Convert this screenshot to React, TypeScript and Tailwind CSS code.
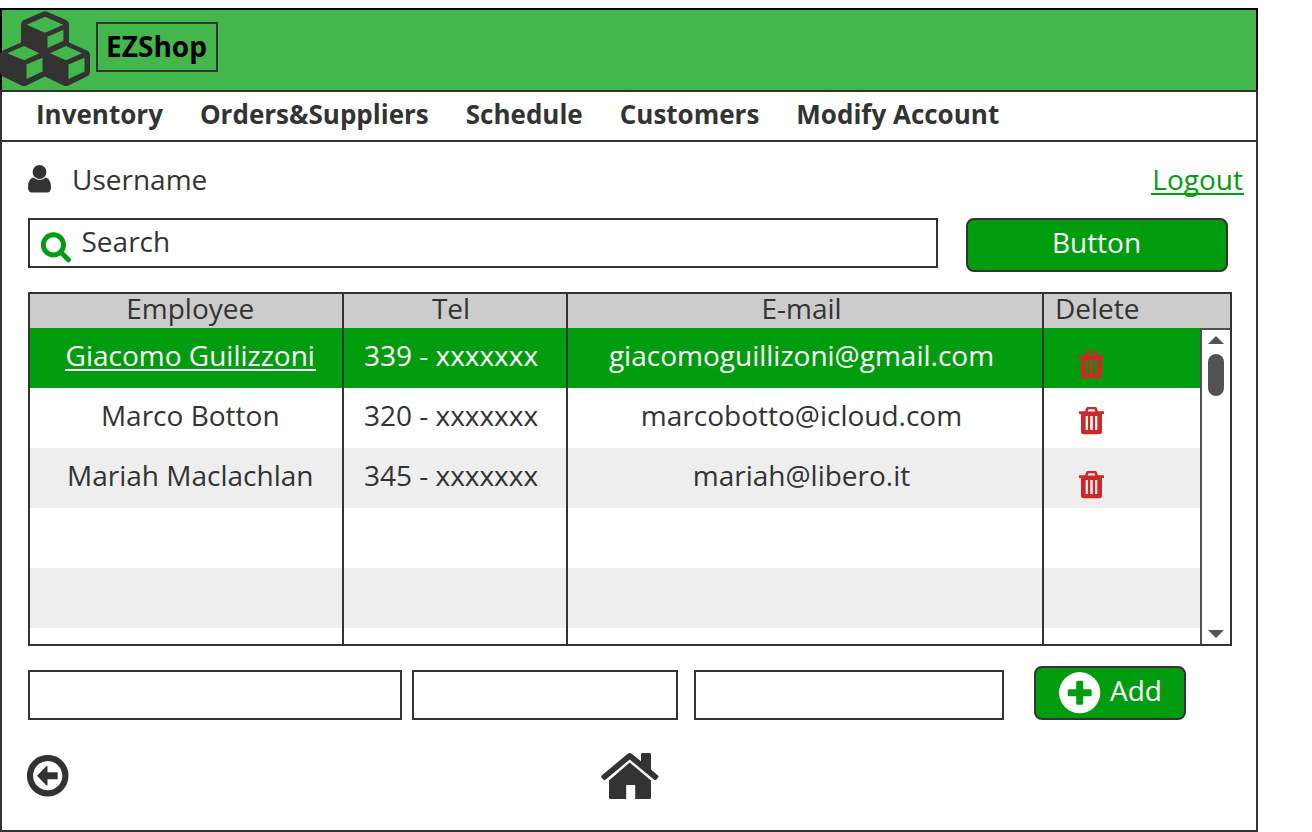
import type { ReactNode } from "react";

const INK = "#333333";

function CubesIcon() {
  return (
    <svg className="block h-[76px] w-[90px] shrink-0" viewBox="0 0 90 76" fill={INK} fillRule="evenodd">
      <path d="M43 .8Q45 -.2 47 .8L66 9Q69 10.300 69 14V31.500L87 39.500Q90 41 90 44V60.500Q90 64 87 65.500L68.500 74.500Q66 75.700 63.500 74.500L45 65.500L26.500 74.500Q24 75.700 21.500 74.500L3 65.500Q0 64 0 60.500V44Q0 41 3 39.500L21 31.500V14Q21 10.300 24 9Z
        M26.700 13.700L45 21.700L63.300 13.700L45 5.700Z M47.500 25.700V37L63.400 29.800V18.800Z
        M7.300 42.300L24 49.300L39.500 42.300L24 35Z M26.500 53.500V68L42.500 60.500V46.700Z
        M50 42.300L66 49.300L82 42.300L66 35Z M68.500 53.500V68L84.500 60.500V46.700Z" />
    </svg>
  );
}

function UserIcon() {
  return (
    <svg className="block h-7 w-[23px] shrink-0" viewBox="0 0 23 28" fill={INK}>
      <circle cx="11.500" cy="7" r="6.900" />
      <path d="M5.500 12.400C1.500 13 0 17.500 0 22.500C0 25.500 1.500 27.600 4 27.600H19C21.500 27.600 23 25.500 23 22.500C23 17.500 21.500 13 17.500 12.400C14 15.600 9 15.600 5.500 12.400Z" />
    </svg>
  );
}

function SearchIcon() {
  return (
    <svg className="block h-[31px] w-[31px] shrink-0" viewBox="0 0 31 31" fill="none" stroke="#029d0e">
      <circle cx="12.400" cy="12.800" r="10.100" strokeWidth="5" />
      <path d="M20.600 21L27.400 27.800" strokeWidth="5" strokeLinecap="round" />
    </svg>
  );
}

function TrashIcon() {
  return (
    <svg className="block h-[28px] w-[25px] shrink-0" viewBox="0 0 25 28" fill="#d02828" fillRule="evenodd">
      <path d="M0 4.300H6L7 1.500Q7.600 -.2 9.500 -.2H15.500Q17.400 -.2 18 1.500L19 4.300H25V7H23V24.500Q23 27.300 20.500 27.300H4.500Q2 27.300 2 24.500V7H0Z
        M8.700 4.600H16.300L15.800 2.800Q15.600 2.300 15 2.300H10Q9.400 2.300 9.200 2.800Z
        M6.700 9V23H8.900V9Z M11.200 9V23H13.800V9Z M16.100 9V23H18.300V9Z" />
    </svg>
  );
}

function PlusCircleIcon() {
  return (
    <svg className="block h-[42px] w-[42px] shrink-0" viewBox="0 0 42 42">
      <circle cx="20.700" cy="20.700" r="20.600" fill="#fff" />
      <path d="M18.700 8.700H22.700Q24.200 8.700 24.200 10.200V17.200H31.200Q32.700 17.200 32.700 18.700V22.700Q32.700 24.200 31.200 24.200H24.200V31.200Q24.200 32.700 22.700 32.700H18.700Q17.200 32.700 17.200 31.200V24.200H10.200Q8.700 24.200 8.700 22.700V18.700Q8.700 17.200 10.200 17.200H17.200V10.200Q17.200 8.700 18.700 8.700Z" fill="#029d0e" />
    </svg>
  );
}

function BackIcon() {
  return (
    <svg className="block h-[42px] w-[42px] shrink-0" viewBox="0 0 42 42">
      <circle cx="20.700" cy="20.700" r="17.700" fill="none" stroke={INK} strokeWidth="6.200" />
      <path d="M10 20.700L19.200 11.300Q20.500 10.300 20.500 12V17.200H30.700V24.200H20.500V29.700Q20.500 31.200 19.200 30.200Z" fill={INK} />
    </svg>
  );
}

function HomeIcon() {
  return (
    <svg className="block h-[46px] w-[58px] shrink-0" viewBox="0 0 58 46" fill={INK}>
      <path d="M28.700 9.500L50 27.500V44.500Q50 46 48.500 46H34.200V32H25.200V46H9.500Q8 46 8 44.500V27.500Z" />
      <path d="M26.700 .7Q28.700 -.7 30.700 .7L40 8.200V1.500Q40 0 41.500 0H48.500Q50 0 50 1.500V16.500L57 22.500Q58 23.500 57.200 24.500L55.200 26.800Q54.200 27.600 53.200 26.800L28.700 6.500L4.500 26.800Q3.500 27.600 2.500 26.800L.5 24.500Q-.3 23.500 .7 22.500Z" />
    </svg>
  );
}

function Cell({ className, children }: { className: string; children?: ReactNode }) {
  return <div className={`flex h-full shrink-0 ${className}`}>{children}</div>;
}

const employeeCell = "w-[314px] items-center justify-center border-r-2 border-[#333333] pb-1.5 pl-[8.500px]";
const telCell = "w-[224px] items-center justify-center border-r-2 border-[#333333] pb-1.5 pr-2";
const mailCell = "w-[476px] items-center justify-center border-r-2 border-[#333333] pb-1.5 pr-[7px]";

const rows = [
  { name: "Giacomo Guilizzoni", tel: "339 - xxxxxxx", mail: "giacomoguillizoni@gmail.com", tone: "h-[60px] bg-[#029d0e] text-white", icon: "pt-[23px]", link: true },
  { name: "Marco Botton", tel: "320 - xxxxxxx", mail: "marcobotto@icloud.com", tone: "h-[60px] bg-white", icon: "pt-[19px]" },
  { name: "Mariah Maclachlan", tel: "345 - xxxxxxx", mail: "mariah@libero.it", tone: "h-[60px] bg-[#eeeeee]", icon: "pt-[23px]" },
  { tone: "h-[60px] bg-white" },
  { tone: "h-[60px] bg-[#eeeeee]" },
  { tone: "h-4 bg-white" },
];

const tabs = ["Inventory", "Orders&Suppliers", "Schedule", "Customers", "Modify Account"];

export default function App() {
  return (
    <div className="h-[832px] w-[1312px] overflow-hidden bg-white pt-2 font-['Open_Sans',sans-serif] text-[28px] leading-[34px] whitespace-nowrap text-[#333333]">
      <div className="flex h-[824px] w-[1258px] flex-col">
        <header className="flex h-[82px] shrink-0 items-start border-x-2 border-t-2 border-black bg-[#43b74b]">
          <div className="-ml-0.5 pt-px">
            <CubesIcon />
          </div>
          <div className="mt-3 ml-1.5 flex h-[50px] w-[122px] items-center justify-center border-2 border-[#333333] pr-px pb-[3px] font-bold text-black">
            EZShop
          </div>
        </header>

        <div className="flex min-h-0 flex-1 flex-col border-2 border-[#333333]">
          <nav className="flex h-[50px] shrink-0 items-center gap-[37px] border-b-2 border-[#333333] pb-1 pl-[34px] text-[26px] font-bold">
            {tabs.map((tab) => (
              <a key={tab}>{tab}</a>
            ))}
          </nav>

          <div className="flex h-[76px] shrink-0 items-center justify-between pr-3 pb-0.5 pl-[26px]">
            <div className="flex items-center">
              <UserIcon />
              <span className="ml-[21px]">Username</span>
            </div>
            <a className="h-8 border-b-2 border-[#029d0e] px-px leading-8 text-[#029d0e]">Logout</a>
          </div>

          <div className="flex shrink-0 items-start gap-7 pl-[26px]">
            <div className="flex h-[50px] w-[910px] border-2 border-[#333333] pl-[11px]">
              <div className="pt-3">
                <SearchIcon />
              </div>
              <span className="ml-[9.500px] pt-1">Search</span>
            </div>
            <button className="flex h-[54px] w-[262px] items-center justify-center rounded-lg border-2 border-[#333333] bg-[#029d0e] pr-px pb-1.5 text-white">
              Button
            </button>
          </div>

          <div className="mt-5 ml-[26px] flex h-[354px] w-[1204px] shrink-0 flex-col border-2 border-[#333333]">
            <div className="flex h-[34px] shrink-0 bg-[#cccccc]">
              <Cell className={employeeCell}>Employee</Cell>
              <Cell className={telCell}>Tel</Cell>
              <Cell className={mailCell}>E-mail</Cell>
              <Cell className="w-[156px] items-center pb-1.5 pl-[11px]">Delete</Cell>
            </div>
            <div className="flex h-[316px]">
              <div className="w-[1170px]">
                {rows.map((row, i) => (
                  <div key={i} className={`flex ${row.tone}`}>
                    <Cell className={employeeCell}>
                      <span className={row.link ? "h-8 border-b-2 border-white px-px leading-8" : ""}>{row.name}</span>
                    </Cell>
                    <Cell className={telCell}>{row.tel}</Cell>
                    <Cell className={mailCell}>{row.mail}</Cell>
                    <Cell className={`w-[156px] items-start pl-[35px] ${row.icon ?? ""}`}>{row.icon && <TrashIcon />}</Cell>
                  </div>
                ))}
              </div>
              <div className="flex w-[30px] flex-col items-center border-t-2 border-l-2 border-[#525252] pt-1.5 pb-1.5">
                <svg className="block h-2 w-4" viewBox="0 0 16 8" fill="#525252"><path d="M0 8L8 0L16 8Z" /></svg>
                <div className="mt-2.5 h-[42px] w-4 rounded-full bg-[#525252]" />
                <svg className="mt-auto block h-2 w-4" viewBox="0 0 16 8" fill="#525252"><path d="M0 0H16L8 8Z" /></svg>
              </div>
            </div>
          </div>

          <div className="mt-5 flex shrink-0 items-start pl-[26px]">
            <div className="mt-1 h-[50px] w-[374px] border-2 border-[#333333]" />
            <div className="mt-1 ml-2.5 h-[50px] w-[266px] border-2 border-[#333333]" />
            <div className="mt-1 ml-4 h-[50px] w-[310px] border-2 border-[#333333]" />
            <button className="ml-[30px] flex h-[54px] w-[152px] items-center rounded-lg border-2 border-[#333333] bg-[#029d0e] pl-[23px] text-white">
              <PlusCircleIcon />
              <span className="ml-[9px] pb-1.5">Add</span>
            </button>
          </div>

          <div className="mt-[33px] flex items-start pl-[25px]">
            <div className="pt-0.5">
              <BackIcon />
            </div>
            <div className="ml-[532px]">
              <HomeIcon />
            </div>
          </div>
        </div>
      </div>
    </div>
  );
}
